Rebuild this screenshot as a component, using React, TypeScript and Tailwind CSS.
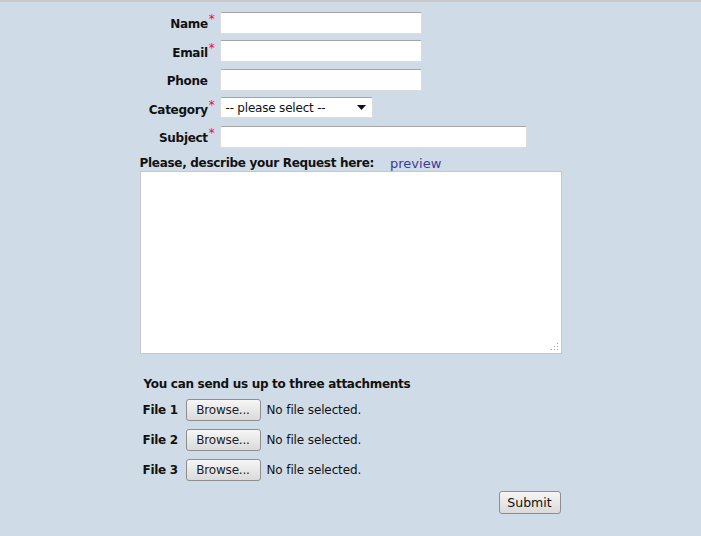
import React from "react";

const font = { fontFamily: '"DejaVu Sans", Verdana, sans-serif' };

const boldText = "font-bold text-[12px] tracking-[-0.3px] text-[#111]";

function Field({ label, required, children }: { label: string; required?: boolean; children: React.ReactNode }) {
  return (
    <div className="flex items-center h-[22px]">
      <div className={`w-[75px] shrink-0 text-right leading-none relative top-[2px] ${boldText}`}>
        {label}
        {required ? (
          <span className="text-[#ff0044] font-normal text-[12px] relative -top-[5px] ml-[1px]">*</span>
        ) : (
          <span className="inline-block w-[7px]" />
        )}
      </div>
      <div className="ml-[5px]">{children}</div>
    </div>
  );
}

function TextBox({ w }: { w: string }) {
  return (
    <input
      type="text"
      className={`${w} h-[22px] bg-white border border-[#dcdcdc] border-t-[#a4a4a4] rounded-[2px] outline-none px-1 text-[13px]`}
    />
  );
}

function FileRow({ n }: { n: number }) {
  return (
    <div className="flex items-center h-[22px]">
      <span className={`ml-[3px] w-[43px] ${boldText}`}>File {n}</span>
      <button className="w-[75px] h-[22px] rounded-[3px] border border-[#8e8e8e] bg-gradient-to-b from-[#f6f6f6] to-[#dadada] text-[12px] text-[#222] leading-none tracking-[-0.2px]">
        Browse...
      </button>
      <span className="ml-[6px] text-[12px] tracking-[-0.12px] text-[#111]">No file selected.</span>
    </div>
  );
}

export default function App() {
  return (
    <div className="min-h-[536px] bg-[#cfdce7] border-t-2 border-[#c9c9c9]" style={font}>
      <div className="w-[422px] mx-auto pt-[9px]">
        <div className="flex flex-col gap-[6.6px]">
          <Field label="Name" required>
            <TextBox w="w-[202px]" />
          </Field>
          <Field label="Email" required>
            <TextBox w="w-[202px]" />
          </Field>
          <Field label="Phone">
            <TextBox w="w-[202px]" />
          </Field>
          <Field label="Category" required>
            <div className="w-[153px] h-[21px] bg-white border border-[#dcdcdc] border-t-[#a4a4a4] rounded-[2px] flex items-center justify-between pl-[5px] pr-[6px] text-[12px] tracking-[-0.2px] text-[#111]">
              <span>-- please select --</span>
              <svg width="9" height="5" viewBox="0 0 9 5">
                <path d="M0 0h9L4.5 5z" fill="#111" />
              </svg>
            </div>
          </Field>
          <Field label="Subject" required>
            <TextBox w="w-[307px]" />
          </Field>
        </div>
        <div className="mt-[7px] flex items-center h-[16px] relative top-[1px]">
          <span className={boldText}>Please, describe your Request here:</span>
          <span className="ml-[16px] text-[13px] text-[#3a3a9c]">preview</span>
        </div>
        <div className="relative mt-[1px] h-[183px] bg-white border border-[#c4c8cc]">
          <svg className="absolute right-[2px] bottom-[2px]" width="9" height="9" viewBox="0 0 9 9">
            <g fill="#9a9a9a">
              <rect x="7" y="1" width="1" height="1" />
              <rect x="4" y="4" width="1" height="1" />
              <rect x="7" y="4" width="1" height="1" />
              <rect x="1" y="7" width="1" height="1" />
              <rect x="4" y="7" width="1" height="1" />
              <rect x="7" y="7" width="1" height="1" />
            </g>
          </svg>
        </div>
        <div className={`mt-[22px] ml-[4px] h-[16px] leading-[16px] ${boldText}`}>
          You can send us up to three attachments
        </div>
        <div className="mt-[7px] flex flex-col gap-[8px]">
          <FileRow n={1} />
          <FileRow n={2} />
          <FileRow n={3} />
        </div>
        <div className="mt-[10px] flex justify-end pr-[1px]">
          <button className="w-[62px] h-[23px] rounded-[3px] border border-[#8e8e8e] bg-gradient-to-b from-[#f6f6f6] to-[#dadada] text-[12.5px] text-[#111] leading-none">
            Submit
          </button>
        </div>
      </div>
    </div>
  );
}
